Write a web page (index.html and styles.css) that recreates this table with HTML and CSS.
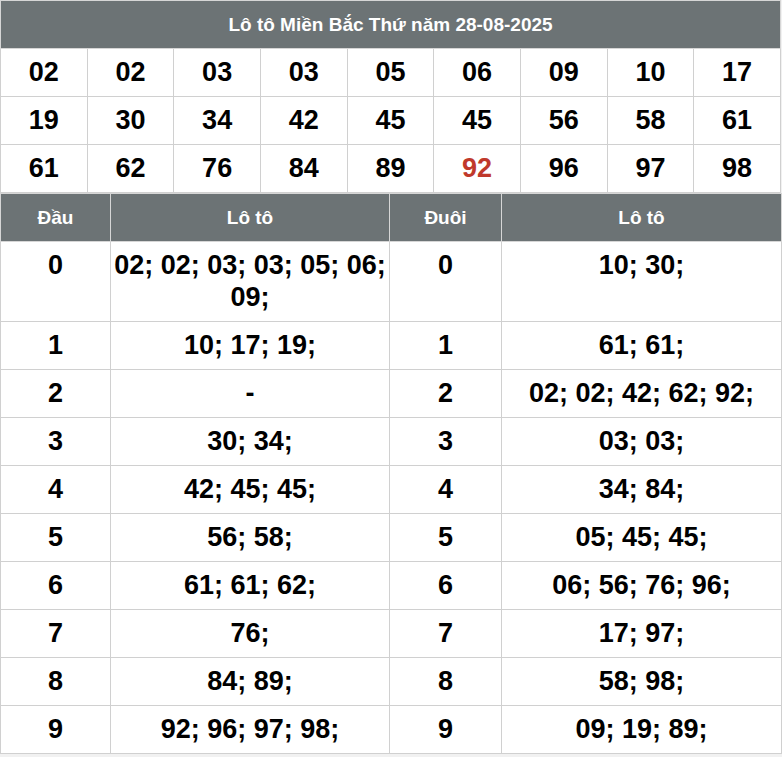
FILE: index.html
```html
<!DOCTYPE html>
<html lang="vi">
<head>
<meta charset="utf-8">
<title>Lô tô Miền Bắc</title>
<link rel="stylesheet" href="styles.css">
</head>
<body>
<div class="wrap">
  <table class="loto">
    <thead>
      <tr><th colspan="9" class="title">Lô tô Miền Bắc Thứ năm 28-08-2025</th></tr>
    </thead>
    <tbody>
      <tr><td>02</td><td>02</td><td>03</td><td>03</td><td>05</td><td>06</td><td>09</td><td>10</td><td>17</td></tr>
      <tr><td>19</td><td>30</td><td>34</td><td>42</td><td>45</td><td>45</td><td>56</td><td>58</td><td>61</td></tr>
      <tr><td>61</td><td>62</td><td>76</td><td>84</td><td>89</td><td class="red">92</td><td>96</td><td>97</td><td>98</td></tr>
    </tbody>
  </table>
  <table class="dd">
    <colgroup><col class="c1"><col class="c2"><col class="c3"><col class="c4"></colgroup>
    <thead>
      <tr><th>Đầu</th><th>Lô tô</th><th>Đuôi</th><th>Lô tô</th></tr>
    </thead>
    <tbody>
      <tr><td>0</td><td>02; 02; 03; 03; 05; 06; 09;</td><td>0</td><td>10; 30;</td></tr>
      <tr><td>1</td><td>10; 17; 19;</td><td>1</td><td>61; 61;</td></tr>
      <tr><td>2</td><td>-</td><td>2</td><td>02; 02; 42; 62; 92;</td></tr>
      <tr><td>3</td><td>30; 34;</td><td>3</td><td>03; 03;</td></tr>
      <tr><td>4</td><td>42; 45; 45;</td><td>4</td><td>34; 84;</td></tr>
      <tr><td>5</td><td>56; 58;</td><td>5</td><td>05; 45; 45;</td></tr>
      <tr><td>6</td><td>61; 61; 62;</td><td>6</td><td>06; 56; 76; 96;</td></tr>
      <tr><td>7</td><td>76;</td><td>7</td><td>17; 97;</td></tr>
      <tr><td>8</td><td>84; 89;</td><td>8</td><td>58; 98;</td></tr>
      <tr><td>9</td><td>92; 96; 97; 98;</td><td>9</td><td>09; 19; 89;</td></tr>
    </tbody>
  </table>
</div>
</body>
</html>
```
FILE: styles.css
```css
html, body {
  margin: 0;
  padding: 0;
  background: #f1f1f1;
}
body {
  font-family: "Liberation Sans", Arial, sans-serif;
  color: #000;
}
.wrap {
  width: 781px;
}
table {
  width: 781px;
  border-collapse: collapse;
  table-layout: fixed;
  background: #fff;
}
th {
  background: #6c7375;
  color: #fff;
  font-size: 19px;
  font-weight: bold;
  height: 48px;
  padding: 0;
  border: 1px solid #d6d6d6;
  box-sizing: border-box;
}
.loto td {
  font-size: 27px;
  font-weight: bold;
  text-align: center;
  height: 47px;
  padding: 0;
  border: 1px solid #d0d0d0;
}
.loto td.red {
  color: #c0392b;
}
.dd col.c1 { width: 110px; }
.dd col.c2 { width: 279px; }
.dd col.c3 { width: 112px; }
.dd col.c4 { width: 280px; }
.dd td {
  font-size: 27px;
  font-weight: bold;
  text-align: center;
  vertical-align: top;
  line-height: 32px;
  padding: 7px 2px 8px;
  border: 1px solid #d0d0d0;
}
```
